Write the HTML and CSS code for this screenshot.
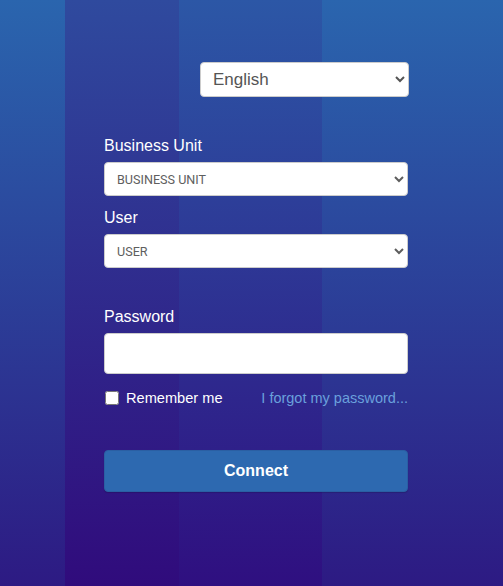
FILE: index.html
```html
<!DOCTYPE html>
<html lang="en">
<head>
  <meta charset="UTF-8">
  <meta name="viewport" content="width=device-width, initial-scale=1.0">
  <title>Login</title>
  <link rel="stylesheet" href="styles.css">
</head>
<body>

  <div class="login">
    <!-- Language -->
    <div class="lang-row">
      <select class="lang-select">
        <option>English</option>
      </select>
    </div>

    <!-- Business unit / user -->
    <label class="field-label label-first">Business Unit</label>
    <select class="field-select">
      <option>BUSINESS UNIT</option>
    </select>

    <label class="field-label">User</label>
    <select class="field-select">
      <option>USER</option>
    </select>

    <!-- Password -->
    <label class="field-label label-password">Password</label>
    <input type="password" class="field-input">

    <div class="options-row">
      <label class="remember">
        <input type="checkbox" class="remember-box">
        Remember me
      </label>
      <a href="#" class="forgot">I forgot my password...</a>
    </div>

    <button class="connect-btn">Connect</button>
  </div>

</body>
</html>
```

FILE: styles.css
```css
html, body {
  height: 100%;
}

body {
  margin: 0;
  padding: 0;
  font-family: 'Liberation Sans', Arial, sans-serif;
  color: #fff;
  overflow: hidden;
  background:
    linear-gradient(#2f4a9e, #300b7c) 65px 0 / 114px 100% no-repeat,
    linear-gradient(#2c57a6, #2f0f80) 179px 0 / 143px 100% no-repeat,
    linear-gradient(#2a65ae, #2d1a83);
}

.login {
  width: 304px;
  margin-left: 104px;
  display: flex;
  flex-direction: column;
}

/* Language picker */
.lang-row {
  display: flex;
  justify-content: flex-end;
  padding-top: 62px;
}

.lang-select {
  width: 209px;
  height: 35px;
  margin-right: -1px;
  padding: 0 8px;
  font-family: 'Liberation Sans', Arial, sans-serif;
  font-size: 17px;
  color: #555;
  background: #fff;
  border: 1px solid #ccc;
  border-radius: 4px;
}

/* Fields */
.field-label {
  display: block;
  font-size: 16px;
  line-height: 18px;
  margin-top: 13px;
  margin-bottom: 7px;
}

.label-first {
  margin-top: 40px;
}

.label-password {
  margin-top: 40px;
}

.field-select {
  width: 304px;
  height: 34px;
  padding: 0 8px;
  font-family: Roboto, 'Liberation Sans', sans-serif;
  font-size: 12.6px;
  color: #5e5e5e;
  background: #fff;
  border: 1px solid #ccc;
  border-radius: 4px;
}

.field-input {
  box-sizing: border-box;
  width: 304px;
  height: 41px;
  padding: 0 10px;
  font-size: 16px;
  background: #fff;
  border: 1px solid #ccc;
  border-radius: 4px;
}

/* Remember me row */
.options-row {
  display: flex;
  justify-content: space-between;
  align-items: center;
  height: 20px;
  margin-top: 14px;
}

.remember {
  display: flex;
  align-items: center;
  font-size: 14.6px;
}

.remember-box {
  width: 14px;
  height: 14px;
  margin: 0 7px 0 1px;
}

.forgot {
  font-size: 14.5px;
  color: #6aa0dc;
  text-decoration: none;
}

/* Connect button */
.connect-btn {
  margin-top: 42px;
  height: 42px;
  width: 304px;
  background: #2d69b0;
  color: #fff;
  border: 1px solid #2a5fa3;
  border-radius: 4px;
  font-family: 'Liberation Sans', Arial, sans-serif;
  font-size: 16px;
  font-weight: bold;
  cursor: pointer;
  box-shadow: 0 1px 1px rgba(0, 0, 0, 0.15);
}

.connect-btn:hover {
  background: #2a60a3;
}
```
